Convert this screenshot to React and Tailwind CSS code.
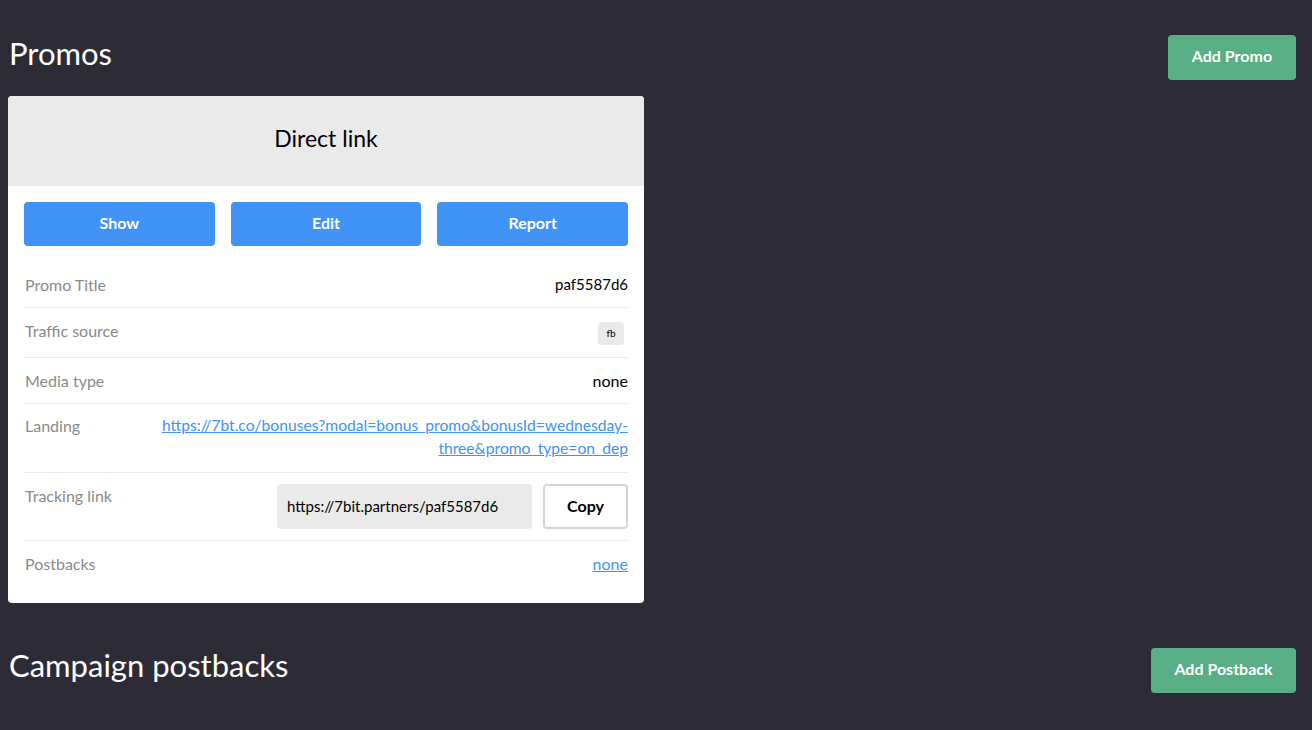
const rows = [
  { label: "Promo Title", value: "paf5587d6" },
];

const App = () => {
  return (
    <div
      className="min-h-[730px] bg-[#2d2b36] pl-2 pr-4 pt-[35px]"
      style={{ fontFamily: "Lato, 'Open Sans', sans-serif" }}
    >
      <div className="flex items-center justify-between">
        <h1 className="pb-2 pl-[1px] text-[31px] text-white leading-none">Promos</h1>
        <button className="h-[45px] w-[128px] rounded bg-[#58ae85] pb-[3px] text-[16px] font-bold text-white">
          Add Promo
        </button>
      </div>

      <div className="mt-4 w-[636px] overflow-hidden rounded bg-white">
        <div className="flex h-[90px] items-center justify-center bg-[#eaeaea] pb-[6px]">
          <h2 className="text-[23px] text-black">Direct link</h2>
        </div>
        <div className="px-4 pt-4 pb-4">
          <div className="grid grid-cols-3 gap-4">
            <button className="h-[44px] rounded bg-[#4193f5] pb-[2px] text-[16px] font-bold text-white">
              Show
            </button>
            <button className="h-[44px] rounded bg-[#4193f5] pb-[2px] text-[16px] font-bold text-white">
              Edit
            </button>
            <button className="h-[44px] rounded bg-[#4193f5] pb-[2px] text-[16px] font-bold text-white">
              Report
            </button>
          </div>

          <div className="mt-4 text-[15px]">
            {rows.map((r) => (
              <div
                key={r.label}
                className="flex h-[46px] items-center justify-between border-b border-[#ececec]"
              >
                <span className="pl-[1px] text-[16px] text-[#8a8a8a]">{r.label}</span>
                <span className="text-black">{r.value}</span>
              </div>
            ))}
            <div className="flex h-[50px] items-start justify-between border-b border-[#ececec] pt-[11px]">
              <span className="pl-[1px] text-[16px] text-[#8a8a8a]">Traffic source</span>
              <span className="mr-1 mt-[3px] flex h-[23px] w-[26px] items-center justify-center rounded bg-[#eaeaea] text-[10px] text-black">
                fb
              </span>
            </div>
            <div className="flex h-[46px] items-center justify-between border-b border-[#ececec]">
              <span className="pl-[1px] text-[16px] text-[#8a8a8a]">Media type</span>
              <span className="text-[16px] text-black">none</span>
            </div>
            <div className="flex h-[69px] items-start justify-between border-b border-[#ececec] pt-[10px]">
              <span className="pl-[1px] text-[16px] text-[#8a8a8a]">Landing</span>
              <a
                href="#"
                className="w-[480px] text-right text-[15.65px] leading-[23px] text-[#4193f5] underline"
              >
                https://7bt.co/bonuses?modal=bonus_promo&amp;bonusId=wednesday-three&amp;promo_type=on_dep
              </a>
            </div>
            <div className="flex h-[68px] items-start justify-between border-b border-[#ececec] pt-[11px]">
              <span className="pl-[1px] text-[16px] text-[#8a8a8a]">Tracking link</span>
              <div className="flex gap-[11px]">
                <div className="flex h-[45px] w-[255px] items-center rounded bg-[#eaeaea] px-[10px] pb-[1px] text-black">
                  https://7bit.partners/paf5587d6
                </div>
                <button className="h-[45px] w-[85px] rounded border-2 border-[#d6d6d6] pb-[2px] text-[16px] font-bold text-black">
                  Copy
                </button>
              </div>
            </div>
            <div className="flex h-[46px] items-center justify-between">
              <span className="pl-[1px] text-[16px] text-[#8a8a8a]">Postbacks</span>
              <a href="#" className="text-[16px] text-[#4193f5] underline">
                none
              </a>
            </div>
          </div>
        </div>
      </div>

      <div className="mt-[45px] flex items-center justify-between">
        <h1 className="pb-[10px] pl-[1px] text-[31px] text-white leading-none">Campaign postbacks</h1>
        <button className="h-[45px] w-[145px] rounded bg-[#58ae85] pb-[3px] text-[16px] font-bold text-white">
          Add Postback
        </button>
      </div>
    </div>
  );
};

export default App;
